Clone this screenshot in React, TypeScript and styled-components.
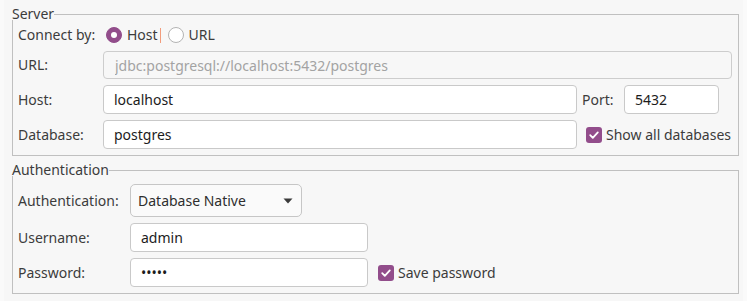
import React from 'react'
import styled, { createGlobalStyle } from 'styled-components'

const GlobalStyle = createGlobalStyle`
  html, body {
    margin: 0;
    padding: 0;
    background: #fafafa;
  }
  body {
    font-family: "Noto Sans", "Open Sans", sans-serif;
    font-size: 14px;
    color: #3c3c3c;
  }
  * { box-sizing: border-box; }
`

const accent = '#924d8b'
const frame = '#c0c0c0'

const Window = styled.div`
  width: 739px;
  height: 301px;
  margin-left: 4px;
  background: #f7f7f7;
  padding: 6px 4px 0 8px;
  display: flex;
  flex-direction: column;
  gap: 6px;
`

const Group = styled.section`
  display: flex;
  flex-direction: column;
`

const GroupTitle = styled.div`
  display: flex;
  height: 14px;
`

const TitleText = styled.span`
  line-height: 16px;
  color: #3c3c3c;
  white-space: nowrap;
`

const TitleRule = styled.div`
  flex: 1;
  margin-top: 8px;
  border-top: 1px solid ${frame};
  border-right: 1px solid ${frame};
`

const GroupBody = styled.div<{ $cols: string; $rows: string; $padTop: number }>`
  display: grid;
  grid-template-columns: ${p => p.$cols};
  grid-template-rows: ${p => p.$rows};
  row-gap: 6px;
  align-items: center;
  padding: ${p => p.$padTop}px 6px 6px 5px;
  border: 1px solid ${frame};
  border-top: none;
`

const Label = styled.span<{ $indent?: number }>`
  line-height: 18px;
  white-space: nowrap;
  margin-left: ${p => p.$indent ?? 0}px;
`

const Field = styled.input<{ $width?: number }>`
  height: 100%;
  width: ${p => (p.$width ? `${p.$width}px` : '100%')};
  border: 1px solid #c9c9c9;
  border-radius: 4px;
  background: #ffffff;
  padding: 0 0 0 10px;
  font-family: inherit;
  font-size: 14px;
  color: #1c1c1c;
  outline: none;

  &:disabled {
    background: #f7f7f7;
    border-color: #cdcdcd;
    color: #a3a3a3;
    padding-left: 11px;
  }
`

const SpanAll = styled.div<{ $from: number; $to?: number }>`
  grid-column: ${p => p.$from} / ${p => p.$to ?? -1};
  height: 100%;
  display: flex;
  align-items: center;
`

const RadioGroup = styled.div`
  grid-column: 2 / -1;
  display: flex;
  align-items: center;
  margin-left: 3px;
`

const RadioDot = styled.span<{ $on?: boolean }>`
  width: 16px;
  height: 16px;
  border-radius: 50%;
  border: 1px solid ${p => (p.$on ? accent : '#b4b4b4')};
  background: ${p => (p.$on ? accent : '#ffffff')};
  display: flex;
  align-items: center;
  justify-content: center;
  margin-right: 5px;

  &::after {
    content: '';
    width: 6px;
    height: 6px;
    border-radius: 50%;
    background: #ffffff;
    display: ${p => (p.$on ? 'block' : 'none')};
  }
`

const Caret = styled.span`
  width: 1px;
  height: 15px;
  background: #f29c7c;
  margin: 0 7px 0 2px;
`

const CheckRow = styled.label<{ $indent: number }>`
  display: flex;
  align-items: center;
  margin-left: ${p => p.$indent}px;
  white-space: nowrap;
`

const CheckBox = styled.span`
  width: 16px;
  height: 16px;
  border-radius: 3px;
  background: ${accent};
  display: flex;
  align-items: center;
  justify-content: center;
  margin-right: 4px;
`

const Combo = styled.div`
  width: 172px;
  height: 100%;
  border: 1px solid #c6c6c6;
  border-radius: 5px;
  background: #fafafa;
  display: flex;
  align-items: center;
  justify-content: space-between;
  padding: 0 8px 0 7px;
  color: #2e2e2e;
`

const Tick = () => (
  <svg width="12" height="12" viewBox="0 0 12 12">
    <path d="M2.2 6.2 L4.8 8.8 L9.8 3.4" fill="none" stroke="#ffffff" strokeWidth="1.8" strokeLinecap="round" strokeLinejoin="round" />
  </svg>
)

const ArrowDown = () => (
  <svg width="10" height="6" viewBox="0 0 10 6">
    <path d="M0.5 0.5 L9.5 0.5 L5 5.5 Z" fill="#3a3a3a" />
  </svg>
)

export default function App() {
  return (
    <>
      <GlobalStyle />
      <Window>
        <Group>
          <GroupTitle>
            <TitleText>Server</TitleText>
            <TitleRule />
          </GroupTitle>
          <GroupBody $cols="85px 474px 47px 1fr" $rows="20px 28px 29px 29px" $padTop={5}>
            <Label>Connect by:</Label>
            <RadioGroup>
              <RadioDot $on />
              <Label>Host</Label>
              <Caret />
              <RadioDot />
              <Label>URL</Label>
            </RadioGroup>

            <Label>URL:</Label>
            <SpanAll $from={2}>
              <Field disabled value="jdbc:postgresql://localhost:5432/postgres" readOnly />
            </SpanAll>

            <Label>Host:</Label>
            <Field value="localhost" readOnly />
            <Label $indent={5}>Port:</Label>
            <Field $width={95} value="5432" readOnly />

            <Label>Database:</Label>
            <Field value="postgres" readOnly />
            <SpanAll $from={3}>
              <CheckRow $indent={9}>
                <CheckBox>
                  <Tick />
                </CheckBox>
                Show all databases
              </CheckRow>
            </SpanAll>
          </GroupBody>
        </Group>

        <Group>
          <GroupTitle>
            <TitleText>Authentication</TitleText>
            <TitleRule />
          </GroupTitle>
          <GroupBody $cols="112px 238px 1fr" $rows="33px 29px 29px" $padTop={8}>
            <Label>Authentication:</Label>
            <SpanAll $from={2}>
              <Combo>
                <span>Database Native</span>
                <ArrowDown />
              </Combo>
            </SpanAll>

            <Label>Username:</Label>
            <Field value="admin" readOnly />
            <span />

            <Label>Password:</Label>
            <Field value="•••••" readOnly />
            <CheckRow $indent={10}>
              <CheckBox>
                <Tick />
              </CheckBox>
              Save password
            </CheckRow>
          </GroupBody>
        </Group>
      </Window>
    </>
  )
}
